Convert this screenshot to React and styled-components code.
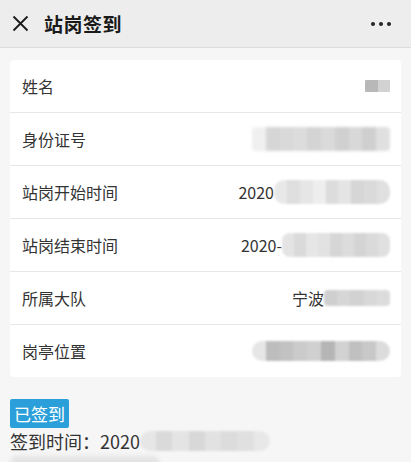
import React from "react";
import styled, { createGlobalStyle } from "styled-components";

const Global = createGlobalStyle`
  html, body { margin: 0; padding: 0; background: #f6f6f6; }
  body { font-family: "Noto Sans CJK SC", "Noto Sans", sans-serif; color: #333; overflow: hidden; }
`;

const Page = styled.div`
  width: 411px;
  height: 462px;
  background: #f6f6f6;
  overflow: hidden;
`;

const Header = styled.div`
  height: 47px;
  background: #ededed;
  border-bottom: 1px solid #dcdcdc;
  display: flex;
  align-items: center;
  padding: 0 20px 0 12px;
`;

const Title = styled.div`
  font-size: 19px;
  font-weight: 700;
  color: #1a1a1a;
  margin-left: 15px;
  flex: 1;
  letter-spacing: 0.5px;
`;

const Dots = styled.div`
  display: flex;
  gap: 4px;
  span { width: 4px; height: 4px; border-radius: 50%; background: #222; }
`;

const Card = styled.div`
  margin: 12px 10px 0 10px;
  background: #fff;
  border-radius: 4px;
  overflow: hidden;
`;

const Row = styled.div`
  height: 52px;
  display: flex;
  align-items: center;
  justify-content: space-between;
  padding: 0 11px 0 12px;
  border-bottom: 1px solid #e6e6e6;
  &:last-child { border-bottom: none; }
`;

const Label = styled.div`
  font-size: 16px;
  color: #333;
`;

const Value = styled.div`
  display: flex;
  align-items: center;
  font-size: 16px;
  color: #333;
`;

const Mosaic = styled.div`
  display: flex;
  height: ${(p) => p.h}px;
  border-radius: ${(p) => p.r}px;
  overflow: hidden;
  filter: blur(${(p) => p.b}px);
  margin-top: ${(p) => p.mt || 0}px;
`;

const Cell = styled.div`
  flex: 1;
  height: 100%;
`;

const Blur = ({ colors, w, h = 22, r = 8, b = 1.2, mt }) => (
  <Mosaic h={h} r={r} b={b} mt={mt} style={{ width: w }}>
    {colors.map((c, i) => (
      <Cell key={i} style={{ background: c }} />
    ))}
  </Mosaic>
);

const Status = styled.div`
  padding: 22px 10px 0 10px;
`;

const Badge = styled.div`
  display: inline-block;
  background: #2b9fd9;
  color: #fff;
  font-size: 17px;
  line-height: 29px;
  padding: 0 4px;
  border-radius: 2px;
`;

const TimeLine = styled.div`
  display: flex;
  align-items: center;
  font-size: 18px;
  line-height: 26px;
  color: #333;
`;

const Tail = styled.div`
  margin-top: 2px;
  width: 150px;
  height: 14px;
  background: #e4e4e4;
  border-radius: 8px;
  filter: blur(2px);
`;

export default function App() {
  return (
    <Page>
      <Global />
      <Header>
        <svg width="17" height="17" viewBox="0 0 17 17">
          <path d="M1.5 1.5 L15.5 15.5 M15.5 1.5 L1.5 15.5" stroke="#1a1a1a" strokeWidth="1.8" />
        </svg>
        <Title>站岗签到</Title>
        <Dots>
          <span />
          <span />
          <span />
        </Dots>
      </Header>
      <Card>
        <Row>
          <Label>姓名</Label>
          <Value>
            <Blur colors={["#b8b8b8", "#d2d2d2"]} w={25} h={12} r={1} b={0.6} />
          </Value>
        </Row>
        <Row>
          <Label>身份证号</Label>
          <Value>
            <Blur
              colors={["#f0f0f0", "#d6d6d6", "#d9d9d9", "#dcdcdc", "#d4d4d4", "#dadada", "#d0d0d0", "#d8d8d8", "#cfcfcf", "#e0e0e0"]}
              w={138}
              h={24}
              r={4}
              b={1.5}
            />
          </Value>
        </Row>
        <Row>
          <Label>站岗开始时间</Label>
          <Value>
            2020
            <Blur
              colors={["#e8e8e8", "#dedede", "#e6e6e6", "#eeeeee", "#dcdcdc", "#e4e4e4", "#d6d6d6", "#dadada", "#e0e0e0"]}
              w={116}
              h={24}
              r={10}
              b={1}
            />
          </Value>
        </Row>
        <Row>
          <Label>站岗结束时间</Label>
          <Value>
            2020-
            <Blur
              colors={["#e4e4e4", "#dadada", "#e6e6e6", "#e2e2e2", "#d6d6d6", "#dcdcdc", "#d4d4d4", "#dadada", "#e0e0e0"]}
              w={108}
              h={24}
              r={8}
              b={1}
            />
          </Value>
        </Row>
        <Row>
          <Label>所属大队</Label>
          <Value>
            宁波
            <Blur colors={["#cfcfcf", "#d6d6d6", "#d2d2d2", "#d8d8d8", "#dcdcdc"]} w={66} h={16} r={4} b={1} />
          </Value>
        </Row>
        <Row>
          <Label>岗亭位置</Label>
          <Value>
            <Blur
              colors={["#e6e6e6", "#bdbdbd", "#c2c2c2", "#cbcbcb", "#d0d0d0", "#b5b5b5", "#d2d2d2", "#c0c0c0", "#c8c8c8", "#dcdcdc"]}
              w={138}
              h={20}
              r={10}
              b={1.2}
            />
          </Value>
        </Row>
      </Card>
      <Status>
        <Badge>已签到</Badge>
        <TimeLine>
          签到时间：2020
          <Blur
            colors={["#e6e6e6", "#dadada", "#e4e4e4", "#d8d8d8", "#e2e2e2", "#dcdcdc", "#e0e0e0", "#e8e8e8"]}
            w={130}
            h={20}
            r={10}
            b={1}
          />
        </TimeLine>
        <Tail />
      </Status>
    </Page>
  );
}
